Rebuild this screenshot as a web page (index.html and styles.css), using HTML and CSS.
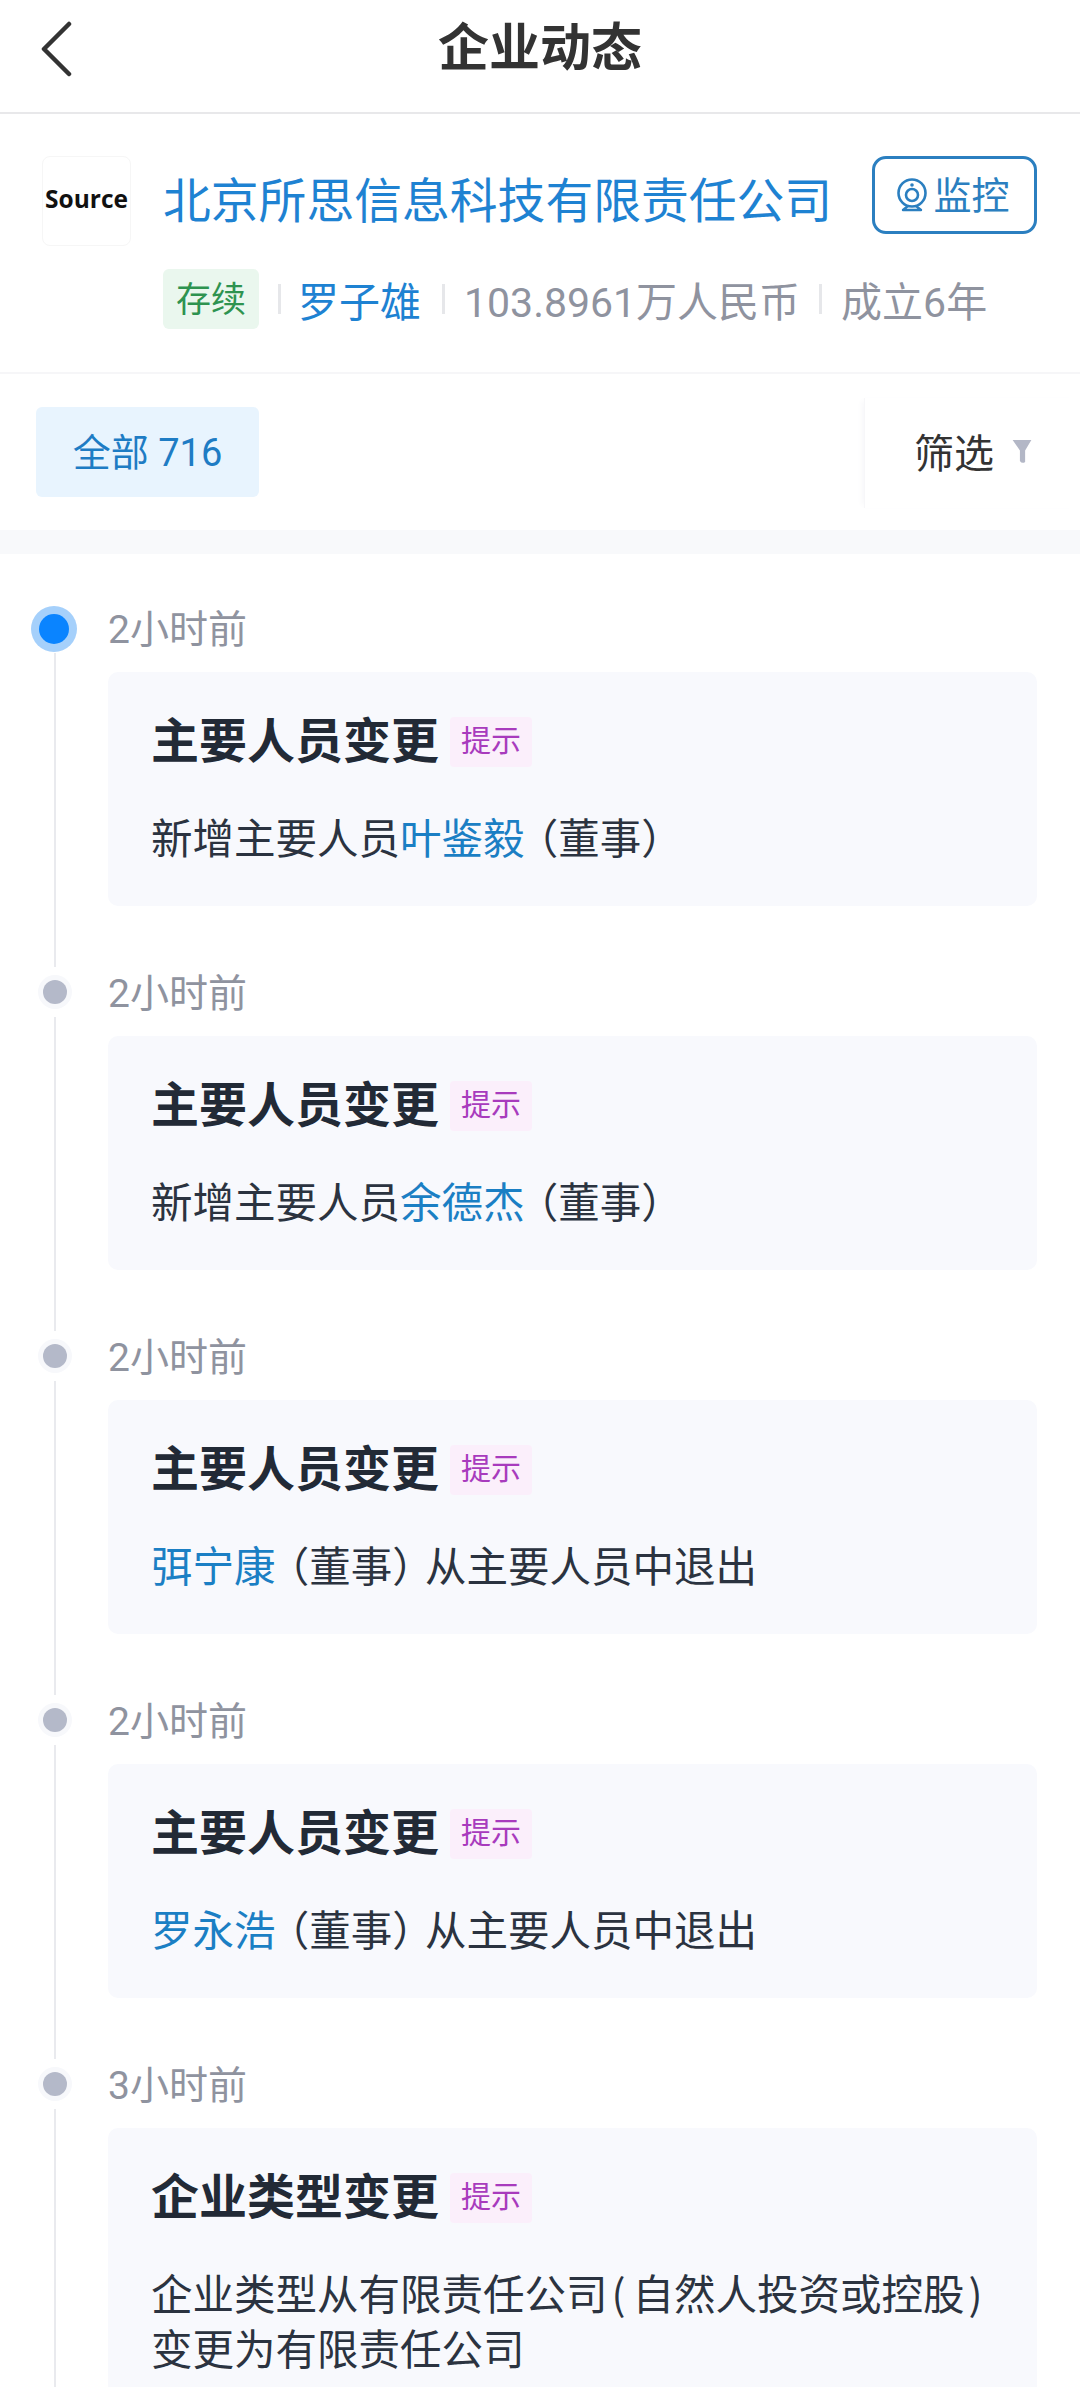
FILE: index.html
```html
<!DOCTYPE html>
<html lang="zh-CN">
<head>
    <meta charset="UTF-8">
    <meta name="viewport" content="width=device-width, initial-scale=1.0">
    <title>企业动态</title>
    <link rel="stylesheet" href="styles.css">
</head>
<body>
    <header class="topbar">
        <svg class="back" width="40" height="60" viewBox="0 0 40 60">
            <path d="M29 3 L4 28 L29 53" fill="none" stroke="#333" stroke-width="4.5" stroke-linecap="round" stroke-linejoin="round"/>
        </svg>
        <h1>企业动态</h1>
    </header>

    <section class="company">
        <div class="logo">Source</div>
        <div class="company-info">
            <div class="company-top">
                <a class="company-name">北京所思信息科技有限责任公司</a>
                <button class="monitor">
                    <svg width="32" height="36" viewBox="0 0 32 36">
                        <circle cx="16" cy="16" r="13.5" fill="none" stroke="#2b7fc0" stroke-width="2.6"/>
                        <circle cx="16" cy="18" r="6" fill="none" stroke="#2b7fc0" stroke-width="2.6"/>
                        <circle cx="16" cy="8" r="1.8" fill="#2b7fc0"/>
                        <path d="M7 33 L12 29 M25 33 L20 29 M7 33 H25" fill="none" stroke="#2b7fc0" stroke-width="2.4" stroke-linecap="round"/>
                    </svg>
                    <span class="monitor-label">监控</span>
                </button>
            </div>
            <div class="company-meta">
                <span class="status">存续</span>
                <i class="sep"></i>
                <a class="person">罗子雄</a>
                <i class="sep"></i>
                <span>103.8961万人民币</span>
                <i class="sep"></i>
                <span>成立6年</span>
            </div>
        </div>
    </section>

    <nav class="tabs">
        <div class="tab-active">全部 716</div>
        <div class="filter">
            筛选
            <svg width="22" height="25" viewBox="0 0 20 24">
                <path d="M1 1 H19 L13 11 V22 Q10 24 8 21 V11 Z" fill="#b3b7c6"/>
            </svg>
        </div>
    </nav>

    <main class="events">
        <article class="event first">
            <div class="time">2小时前</div>
            <div class="card">
                <div class="card-title">主要人员变更<span class="tag">提示</span></div>
                <p class="card-text">新增主要人员<a>叶鉴毅</a><span class="open">（</span>董事<span class="close">）</span></p>
            </div>
        </article>
        <article class="event">
            <div class="time">2小时前</div>
            <div class="card">
                <div class="card-title">主要人员变更<span class="tag">提示</span></div>
                <p class="card-text">新增主要人员<a>余德杰</a><span class="open">（</span>董事<span class="close">）</span></p>
            </div>
        </article>
        <article class="event">
            <div class="time">2小时前</div>
            <div class="card">
                <div class="card-title">主要人员变更<span class="tag">提示</span></div>
                <p class="card-text"><a>弭宁康</a><span class="open">（</span>董事<span class="close">）</span>从主要人员中退出</p>
            </div>
        </article>
        <article class="event">
            <div class="time">2小时前</div>
            <div class="card">
                <div class="card-title">主要人员变更<span class="tag">提示</span></div>
                <p class="card-text"><a>罗永浩</a><span class="open">（</span>董事<span class="close">）</span>从主要人员中退出</p>
            </div>
        </article>
        <article class="event">
            <div class="time">3小时前</div>
            <div class="card">
                <div class="card-title">企业类型变更<span class="tag">提示</span></div>
                <p class="card-text">企业类型从有限责任公司<span class="wide">(</span>自然人投资或控股<span class="wide">)</span><br>变更为有限责任公司</p>
            </div>
        </article>
    </main>
</body>
</html>
```

FILE: styles.css
```css
* {
    box-sizing: border-box;
}
html, body {
    margin: 0;
    height: 2387px;
    overflow: hidden;
}
body {
    background: #fff;
    font-family: Roboto, "Noto Sans CJK SC", sans-serif;
    color: #2b3340;
}
a {
    color: #1b7fc4;
}

/* top bar */
.topbar {
    position: relative;
    height: 114px;
    border-bottom: 2px solid #e8e8ea;
    display: flex;
    align-items: center;
    justify-content: center;
}
.back {
    position: absolute;
    left: 40px;
    top: 21px;
}
h1 {
    margin: -14px 0 0;
    font-size: 51px;
    font-weight: 700;
    color: #333;
    line-height: 70px;
}

/* company header */
.company {
    display: flex;
    height: 260px;
    padding: 42px 43px 0 42px;
    border-bottom: 2px solid #f6f6f8;
}
.logo {
    width: 89px;
    height: 90px;
    flex: none;
    padding-bottom: 5px;
    border: 1px solid #f6f6f6;
    border-radius: 8px;
    display: flex;
    align-items: center;
    justify-content: center;
    font-family: "Open Sans", sans-serif;
    font-weight: 700;
    font-size: 24.5px;
    color: #111;
}
.company-info {
    margin-left: 32px;
    flex: 1;
}
.company-top {
    display: flex;
    justify-content: space-between;
    align-items: flex-start;
}
.company-name {
    font-size: 47.8px;
    line-height: 64px;
    margin-top: 14px;
    color: #1e82d2;
    white-space: nowrap;
}
.monitor {
    width: 165px;
    height: 78px;
    padding: 0;
    margin-left: -10px;
    flex: none;
    display: flex;
    align-items: center;
    justify-content: center;
    gap: 5px;
    background: #fff;
    border: 3.5px solid #2b7fc0;
    border-radius: 14px;
    color: #2b7fc0;
    font: 38px Roboto, "Noto Sans CJK SC", sans-serif;
}
.monitor svg {
    margin-left: -3px;
}
.monitor-label {
    margin-top: -5px;
}
.company-meta {
    display: flex;
    align-items: center;
    height: 60px;
    margin-top: 35px;
    font-size: 41px;
    color: #8f939f;
}
.status {
    width: 96px;
    height: 60px;
    line-height: 64px;
    text-align: center;
    font-size: 35px;
    color: #2e9350;
    background: #eaf7ee;
    border-radius: 6px;
}
.person {
    color: #1e82d2;
    margin: 0 2px 0 -2px;
}
.sep {
    width: 3px;
    height: 30px;
    margin: 0 19px;
    background: #e6e7ea;
}

/* tabs */
.tabs {
    height: 156px;
    position: relative;
    padding: 33px 0 0 36px;
}
.tab-active {
    width: 223px;
    height: 90px;
    line-height: 93px;
    text-align: center;
    font-size: 38px;
    color: #1e7cc4;
    background: #e8f4fe;
    border-radius: 6px;
}
.filter {
    position: absolute;
    right: 0;
    top: 24px;
    width: 216px;
    height: 110px;
    padding: 0 0 4px 49px;
    display: flex;
    align-items: center;
    gap: 17px;
    font-size: 40px;
    color: #333;
    border-left: 1px solid #f7f7f9;
    box-shadow: -5px 0 6px -3px #f7f7f9;
}

/* timeline */
.events {
    border-top: 24px solid #f8f9fb;
    padding: 54px 43px 0 108px;
}
.event {
    position: relative;
    margin-bottom: 66px;
}
.event::before {
    content: "";
    position: absolute;
    left: -65px;
    top: 8px;
    width: 24px;
    height: 24px;
    border-radius: 50%;
    background: #b4b9c9;
    box-shadow: 0 0 0 5px #f7f8fb;
}
.event::after {
    content: "";
    position: absolute;
    left: -54px;
    top: 45px;
    bottom: -61px;
    width: 2px;
    background: #e9eaee;
}
.first::before {
    left: -69px;
    top: 6px;
    width: 30px;
    height: 30px;
    background: #0a84ff;
    box-shadow: 0 0 0 8px #a5d0fb;
}
.time {
    height: 44px;
    font-size: 39px;
    line-height: 44px;
    color: #8f939f;
}
.card {
    margin-top: 20px;
    padding: 46px 43px 42px;
    background: #f8f9fd;
    border-radius: 10px;
}
.card-title {
    display: flex;
    align-items: center;
    height: 48px;
    font-size: 48px;
    line-height: 48px;
    font-weight: 700;
    color: #222a36;
}
.tag {
    width: 82px;
    height: 50px;
    line-height: 48px;
    margin-left: 11px;
    text-align: center;
    font-size: 30px;
    font-weight: 400;
    color: #a83bbd;
    background: #fbeffb;
    border-radius: 4px;
}
.card-text {
    margin: 43px 0 0;
    font-family: "Noto Sans CJK SC", sans-serif;
    font-size: 41.5px;
    line-height: 55px;
    white-space: nowrap;
}
.open {
    font-feature-settings: "halt";
    margin-left: 13px;
}
.close {
    font-feature-settings: "halt";
    margin-right: 12px;
}
.wide {
    margin: 0 7px 0 4px;
}
```
